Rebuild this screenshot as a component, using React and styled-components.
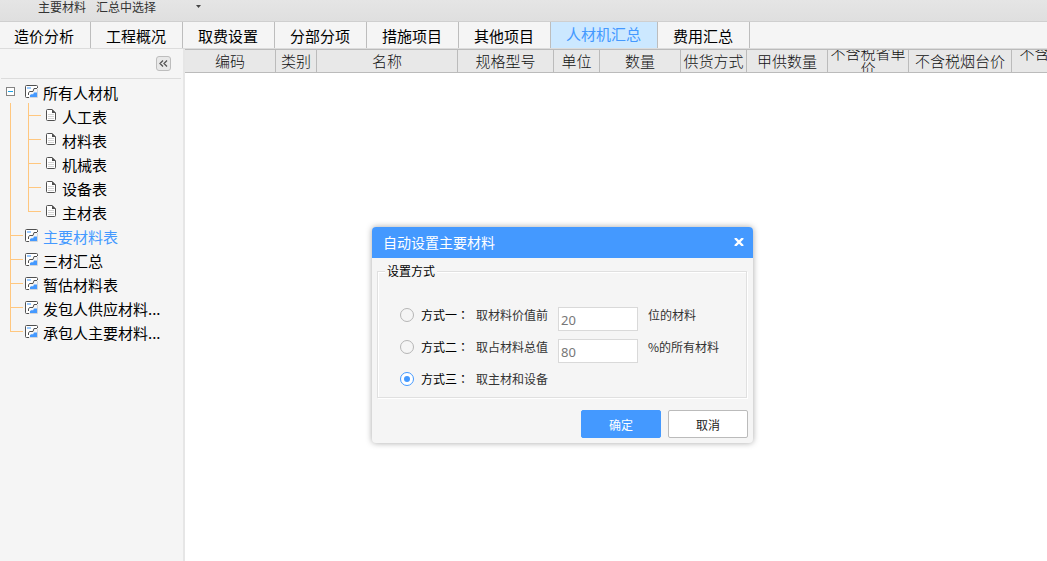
import React, { useState } from "react";
import styled, { createGlobalStyle } from "styled-components";

const blue = "#4499ff";
const panel = "#f5f5f5";
const guide = "#ffc77f";

const GlobalStyle = createGlobalStyle`
  *, *::before, *::after { box-sizing: border-box; }
  body {
    margin: 0;
    background: #fff;
    color: #000;
    font-family: "Noto Sans CJK SC", "Liberation Sans", sans-serif;
    font-size: 15px;
    overflow: hidden;
  }
  button, input { font-family: inherit; margin: 0; }
  button { cursor: pointer; }
`;

const Page = styled.div`
  display: flex;
  flex-direction: column;
  min-height: 100vh;
`;

const Toolbar = styled.header`
  display: flex;
  align-items: flex-start;
  gap: 10px;
  height: 22px;
  padding-left: 38px;
  background: linear-gradient(#e5e5e5, #dfdfdf);
  border-bottom: 1px solid #cfcfcf;
`;

const ToolButton = styled.button`
  padding: 0;
  border: 0;
  background: none;
  color: #333;
  font-size: 12px;
  line-height: 14px;
`;

const MenuButton = styled(ToolButton)`
  display: flex;
  align-items: center;
  height: 13px;
  margin-left: 30px;
`;

const TabBar = styled.nav`
  display: flex;
  height: 27px;
  background: ${panel};
  border-bottom: 1px solid #dcdcdc;
`;

const Tab = styled.button`
  padding: ${(p) => (p.$active ? "0 16px 2px 15px" : "1px 16px 0 15px")};
  border: 0;
  border-right: 1px solid #bdbdbd;
  background: ${(p) => (p.$active ? "#cce8ff" : "transparent")};
  color: ${(p) => (p.$active ? blue : "#000")};
  font-size: 15px;
  line-height: 22px;
  white-space: nowrap;
  flex: none;

  &:first-child { padding-left: 14px; }
`;

const Body = styled.div`
  display: flex;
  flex: 1;
`;

const Sidebar = styled.aside`
  flex: none;
  width: 185px;
  background: ${panel};
  border-right: 2px solid #e6e6e6;
`;

const SidebarHead = styled.div`
  display: flex;
  align-items: center;
  justify-content: flex-end;
  height: 30px;
  margin: 0 2px 0 1px;
  padding-right: 10px;
  border-bottom: 1px solid #dcdcdc;
`;

const CollapseButton = styled.button`
  display: grid;
  place-items: center;
  width: 15px;
  height: 15px;
  padding: 0;
  border: 1px solid #bdbdbd;
  border-radius: 3px;
  background: #e8e8e8;
`;

const Tree = styled.ul`
  margin: 0;
  padding: 0;
  list-style: none;
`;

const TreeRow = styled.li`
  display: flex;
  align-items: center;
  height: 24px;
  padding-left: ${(p) => (p.$root ? "6px" : "10px")};
`;

const Toggle = styled.button`
  display: grid;
  place-items: center;
  width: 9px;
  height: 9px;
  margin-right: 10px;
  padding: 0;
  border: 1px solid #848484;
  background: #fff;

  &::before {
    content: "";
    width: 5px;
    height: 1px;
    background: #1ba1e2;
  }
`;

const Trunk = styled.span`
  flex: none;
  align-self: stretch;
  width: 18px;
  border-left: 1px solid ${guide};
`;

const Branch = styled.span`
  flex: none;
  align-self: stretch;
  width: 13px;
  margin-right: ${(p) => (p.$leaf ? "5px" : "2px")};

  &::before {
    content: "";
    display: block;
    height: 13px;
    border-left: 1px solid ${guide};
    border-bottom: 1px solid ${guide};
  }
  &::after {
    content: "";
    display: ${(p) => (p.$last ? "none" : "block")};
    height: 11px;
    border-left: 1px solid ${guide};
  }
`;

const TreeLink = styled.a`
  padding: 4px 0 0 ${(p) => (p.$leaf ? "6px" : "5px")};
  color: ${(p) => (p.$active ? blue : "#000")};
  font-size: 15px;
  line-height: 20px;
  text-decoration: none;
  white-space: nowrap;
`;

const Main = styled.main`
  flex: 1;
  min-width: 0;
  overflow: hidden;
`;

const Grid = styled.table`
  table-layout: fixed;
  width: 1px;
  border-collapse: separate;
  border-spacing: 0;
`;

const HeadCell = styled.th`
  width: ${(p) => p.$width}px;
  padding: 0;
  background: #e8e8e8;
  border: 1px solid #bbb;
  border-left: 0;
  color: #111;
  font-size: 15px;
  font-weight: 300;
  line-height: 15px;
`;

const HeadText = styled.div`
  display: flex;
  align-items: center;
  justify-content: center;
  height: 22px;
  padding: 0 2px 2px;
  overflow: hidden;
`;

const Dialog = styled.form`
  position: absolute;
  left: 372px;
  top: 227px;
  width: 381px;
  border-radius: 4px;
  background: ${panel};
  box-shadow: 0 0 6px rgba(0, 0, 0, 0.35);
  font-size: 12px;
`;

const DialogHead = styled.div`
  display: flex;
  align-items: center;
  justify-content: space-between;
  height: 31px;
  padding: 0 9px 2px 11px;
  border-radius: 4px 4px 0 0;
  background: ${blue};
  color: #fff;
`;

const DialogTitle = styled.h2`
  margin: 0;
  font-size: 14px;
  font-weight: 400;
  line-height: 20px;
`;

const CloseButton = styled.button`
  display: grid;
  place-items: center;
  padding: 0;
  border: 0;
  background: none;
`;

const Options = styled.fieldset`
  display: flex;
  flex-direction: column;
  gap: 8px;
  min-width: 0;
  margin: 4px 6px 0 5px;
  padding: 27px 0 2px 22px;
  border: 1px solid #e0e0e0;
  box-shadow: 1px 1px #fff, inset 1px 1px #fff;
`;

const Legend = styled.legend`
  margin-left: -15px;
  padding: 0 2px;
  background: ${panel};
  line-height: 18px;
`;

const OptionRow = styled.div`
  display: flex;
  align-items: flex-start;
  height: 24px;
  line-height: 16px;
`;

const Radio = styled.input`
  appearance: none;
  flex: none;
  display: grid;
  place-items: center;
  width: 14px;
  height: 14px;
  margin: 1px 7px 0 0;
  border: 1px solid #b5b5b5;
  border-radius: 50%;
  background: ${panel};

  &:checked { border-color: ${blue}; background: #fff; }
  &:checked::before {
    content: "";
    width: 6px;
    height: 6px;
    border-radius: 50%;
    background: ${blue};
  }
`;

const OptionLabel = styled.label`
  width: 55px;
  font-family: "Noto Sans CJK TC", sans-serif;
`;

const OptionText = styled.span`
  width: ${(p) => (p.$lead ? "82px" : "auto")};
  color: #333;
`;

const NumberBox = styled.input`
  width: 80px;
  height: 24px;
  margin-right: 10px;
  padding: 2px 2px 0;
  border: 1px solid #d9d9d9;
  background: #fff;
  color: #777;
  font-family: "Noto Sans", sans-serif;
  font-size: 13px;
`;

const Actions = styled.div`
  display: flex;
  justify-content: flex-end;
  gap: 7px;
  padding: 12px 5px 5px;
`;

const ActionButton = styled.button`
  width: 80px;
  height: 28px;
  padding: 0;
  border: 1px solid ${(p) => (p.$primary ? blue : "#bbb")};
  border-radius: 2px;
  background: ${(p) => (p.$primary ? blue : "#fff")};
  color: ${(p) => (p.$primary ? "#fff" : "#222")};
  font-size: 12px;
`;

const SheetIcon = () => (
  <svg width="13" height="13" viewBox="0 0 13 13" fill="none" aria-hidden="true">
    <path d="M1 1h11v3H9v3H6L4 12H1z" fill="#fff" />
    <path d="M4.500 12.500h8V4" stroke="#d0d4da" />
    <path d="M12.500 3V1.500a1 1 0 0 0-1-1h-10a1 1 0 0 0-1 1v10a1 1 0 0 0 1 1H4" stroke="#505050" />
    <path d="M2 2h4v2H2z" fill="#9ccbff" />
    <path d="M12 3.500H9L8 6.500H4.500L3.500 8v2" stroke="#505050" />
    <path d="M5 12v-2l2-1 1 .5L9 7.500h3V12z" fill={blue} />
  </svg>
);

const PageIcon = () => (
  <svg width="10" height="12" viewBox="0 0 10 12" fill="none" aria-hidden="true">
    <path d="M6 .5H1.500a1 1 0 0 0-1 1v9a1 1 0 0 0 1 1h7a1 1 0 0 0 1-1V4z" fill="#fff" stroke="#505050" />
    <path d="M6 0L10 4H6z" fill="#505050" />
    <path d="M2 5.500h6M2 7.500h6M2 9.500h6" stroke="#d4d4d4" />
  </svg>
);

const tabs = ["造价分析", "工程概况", "取费设置", "分部分项", "措施项目", "其他项目", "人材机汇总", "费用汇总"];
const leaves = ["人工表", "材料表", "机械表", "设备表", "主材表"];
const sheets = ["主要材料表", "三材汇总", "暂估材料表", "发包人供应材料...", "承包人主要材料..."];
const columns = [
  ["编码", 91],
  ["类别", 41],
  ["名称", 141],
  ["规格型号", 96],
  ["单位", 46],
  ["数量", 81],
  ["供货方式", 66],
  ["甲供数量", 81],
  ["不含税省单价", 81],
  ["不含税烟台价", 103],
  ["不含税市单价", 91],
];
const options = [
  { id: "one", label: "方式一：", lead: "取材料价值前", value: "20", tail: "位的材料" },
  { id: "two", label: "方式二：", lead: "取占材料总值", value: "80", tail: "%的所有材料" },
  { id: "three", label: "方式三：", lead: "取主材和设备" },
];

export default function App() {
  const [mode, setMode] = useState("three");

  return (
    <Page>
      <GlobalStyle />
      <Toolbar>
        <ToolButton type="button">主要材料</ToolButton>
        <ToolButton type="button">汇总中选择</ToolButton>
        <MenuButton type="button" aria-label="更多">
          <svg width="5" height="3" viewBox="0 0 5 3" aria-hidden="true">
            <path d="M0 0h5L2.500 3z" fill="#444" />
          </svg>
        </MenuButton>
      </Toolbar>
      <TabBar>
        {tabs.map((t) => (
          <Tab type="button" key={t} $active={t === "人材机汇总"}>{t}</Tab>
        ))}
      </TabBar>
      <Body>
        <Sidebar>
          <SidebarHead>
            <CollapseButton type="button" aria-label="收起">
              <svg width="9" height="7" viewBox="0 0 9 7" fill="none" aria-hidden="true">
                <path d="M4 .5l-3 3 3 3M8 .5l-3 3 3 3" stroke="#555" strokeWidth="1.300" />
              </svg>
            </CollapseButton>
          </SidebarHead>
          <Tree>
            <TreeRow $root>
              <Toggle type="button" aria-label="折叠" />
              <SheetIcon />
              <TreeLink href="#all">所有人材机</TreeLink>
            </TreeRow>
            {leaves.map((t, i) => (
              <TreeRow key={t}>
                <Trunk />
                <Branch $leaf $last={i === leaves.length - 1} />
                <PageIcon />
                <TreeLink $leaf href={`#leaf-${i}`}>{t}</TreeLink>
              </TreeRow>
            ))}
            {sheets.map((t, i) => (
              <TreeRow key={t}>
                <Branch $last={i === sheets.length - 1} />
                <SheetIcon />
                <TreeLink $active={i === 0} href={`#sheet-${i}`}>{t}</TreeLink>
              </TreeRow>
            ))}
          </Tree>
        </Sidebar>
        <Main>
          <Grid>
            <thead>
              <tr>
                {columns.map(([name, width]) => (
                  <HeadCell key={name} $width={width}>
                    <HeadText>{name}</HeadText>
                  </HeadCell>
                ))}
              </tr>
            </thead>
          </Grid>
        </Main>
      </Body>

      <Dialog role="dialog" aria-labelledby="dialog-title" onSubmit={(e) => e.preventDefault()}>
        <DialogHead>
          <DialogTitle id="dialog-title">自动设置主要材料</DialogTitle>
          <CloseButton type="button" aria-label="关闭">
            <svg width="10" height="8" viewBox="0 0 10 8" aria-hidden="true">
              <path d="M1 0l8 8M9 0L1 8" stroke="#fff" strokeWidth="2.400" />
            </svg>
          </CloseButton>
        </DialogHead>
        <Options>
          <Legend>设置方式</Legend>
          {options.map((o) => (
            <OptionRow key={o.id}>
              <Radio
                type="radio"
                name="mode"
                id={o.id}
                checked={mode === o.id}
                onChange={() => setMode(o.id)}
              />
              <OptionLabel htmlFor={o.id}>{o.label}</OptionLabel>
              <OptionText $lead>{o.lead}</OptionText>
              {o.value && <NumberBox type="text" aria-label={o.lead} defaultValue={o.value} />}
              {o.tail && <OptionText>{o.tail}</OptionText>}
            </OptionRow>
          ))}
        </Options>
        <Actions>
          <ActionButton type="submit" $primary>确定</ActionButton>
          <ActionButton type="button">取消</ActionButton>
        </Actions>
      </Dialog>
    </Page>
  );
}
